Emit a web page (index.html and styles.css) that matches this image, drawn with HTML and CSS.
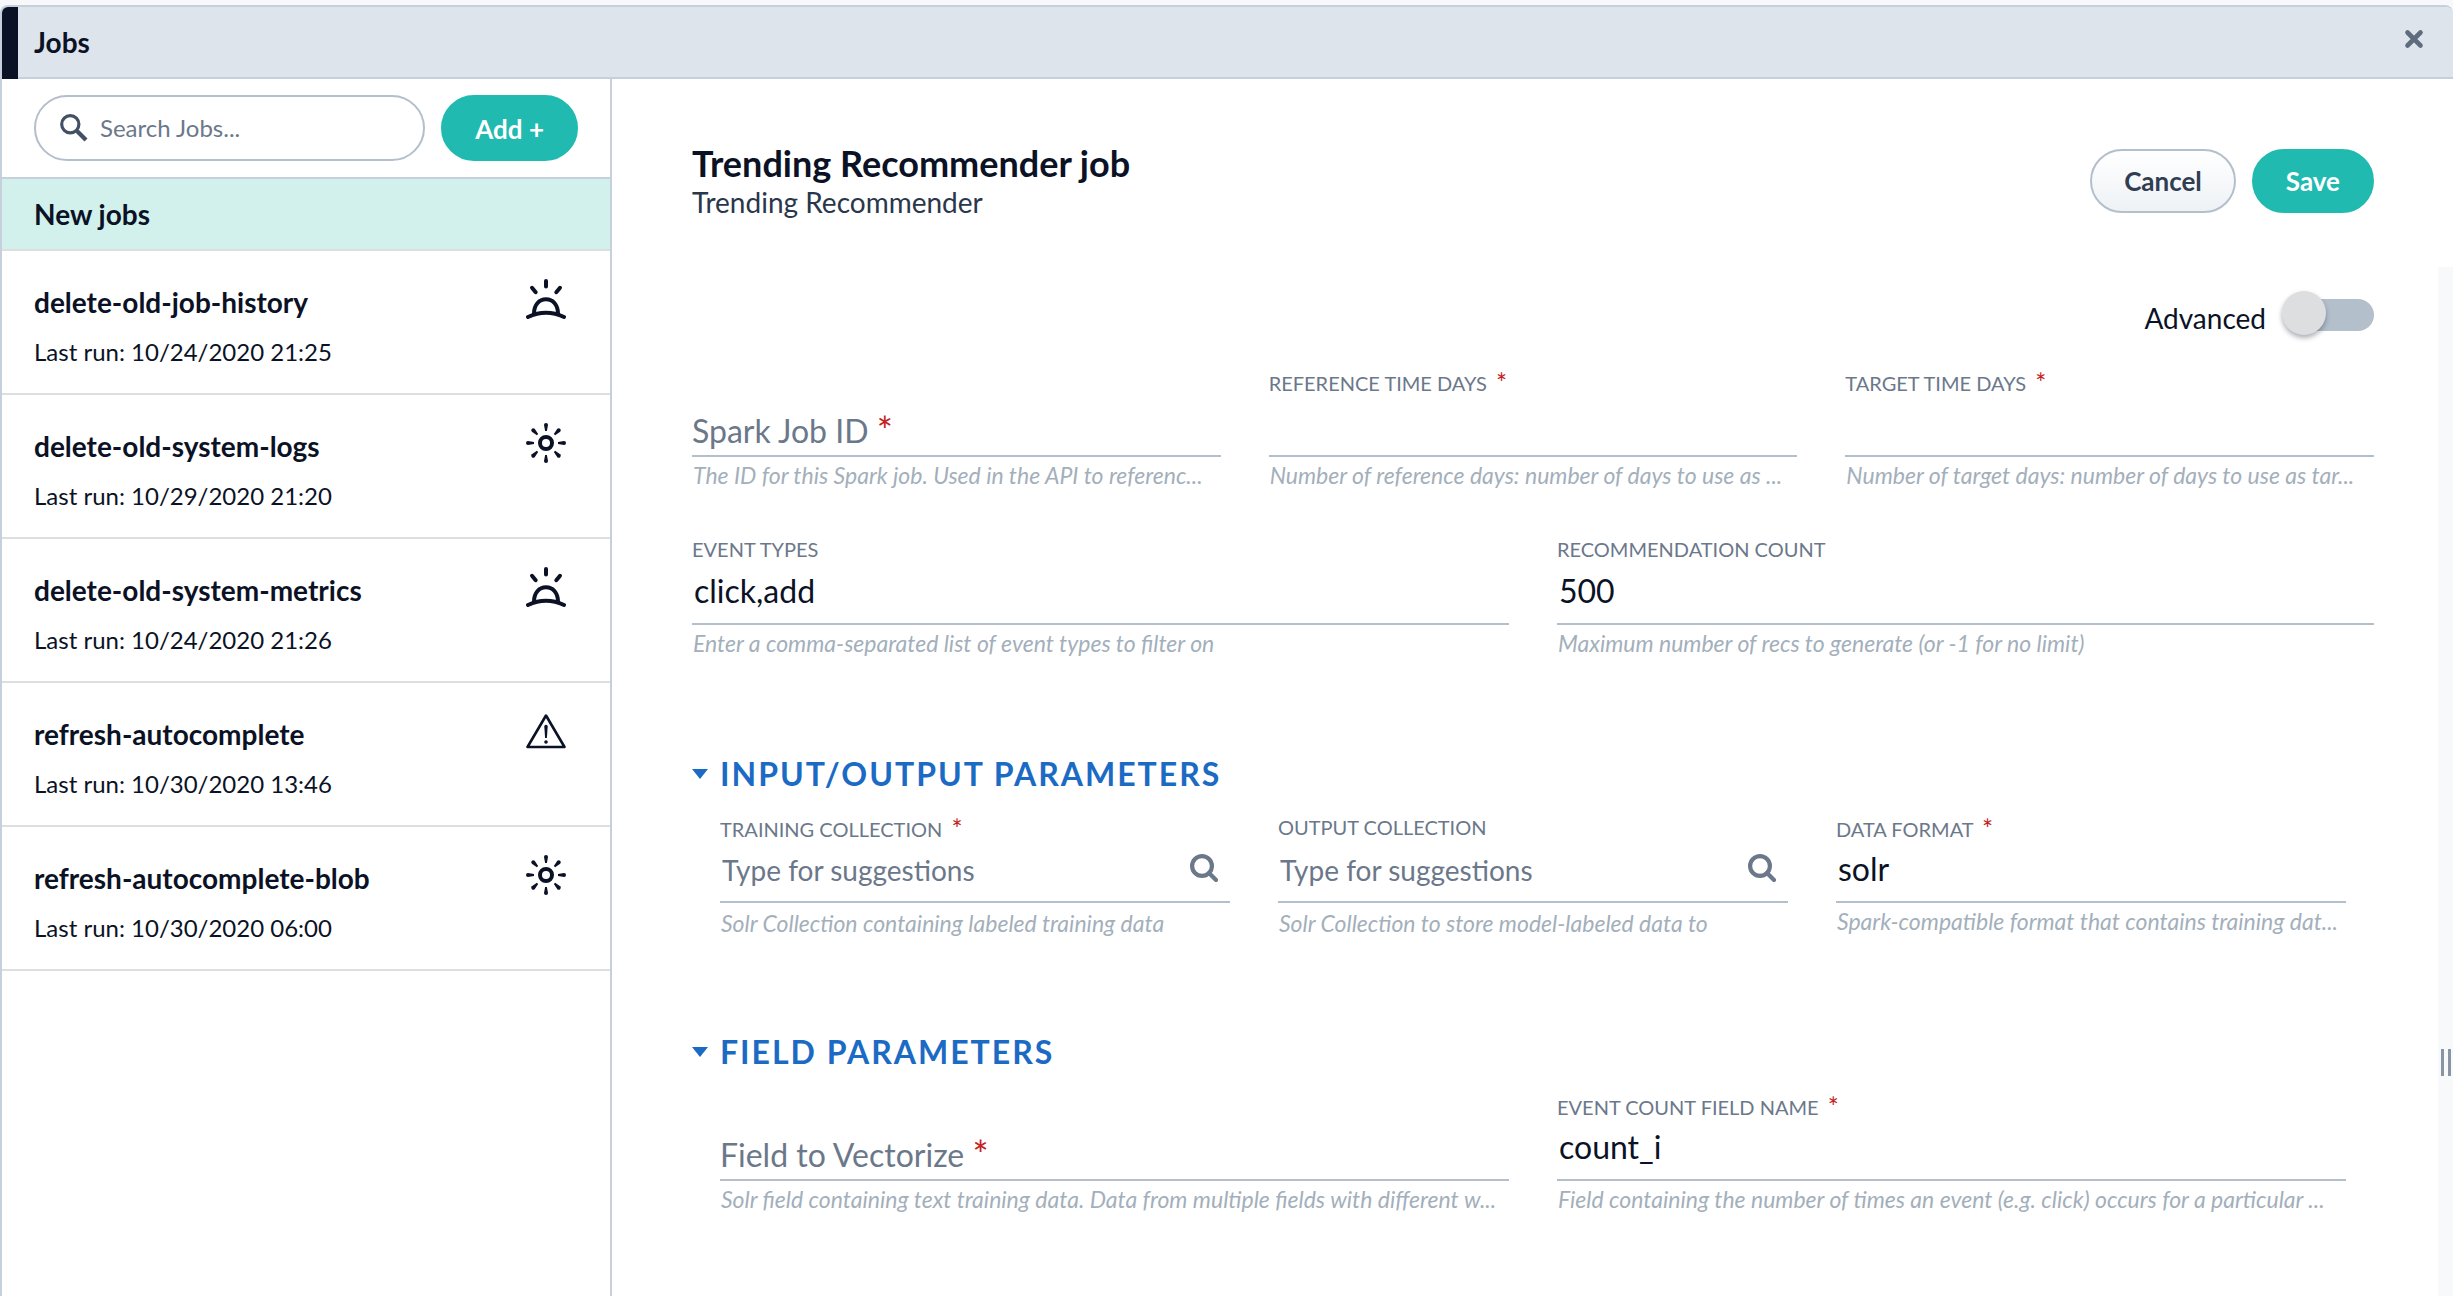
FILE: index.html
```html
<!DOCTYPE html>
<html lang="en">
<head>
<meta charset="utf-8">
<meta name="viewport" content="width=device-width, initial-scale=1">
<title>Jobs</title>
<link rel="stylesheet" href="styles.css">
</head>
<body>
<svg class="sprite" aria-hidden="true">
  <symbol id="icon-sunrise" viewBox="0 0 40 40">
    <g fill="none" stroke="currentColor" stroke-width="4" stroke-linecap="round" stroke-linejoin="round">
      <path d="M20 2v5.500M6 8.800l3.700 4.400M34 8.800l-3.700 4.400"/>
      <path d="M8 34.500C8 26 13 20.300 20 20.300S32 26 32 34.500"/>
      <path d="M2 38Q20 29.500 38 38"/>
    </g>
  </symbol>
  <symbol id="icon-sun" viewBox="0 0 40 40">
    <circle cx="20" cy="20" r="6" fill="none" stroke="currentColor" stroke-width="4"/>
    <g fill="currentColor">
      <path d="M18 2a2 2 0 0 1 4 0L20.900 8h-1.800z"/>
      <path d="M18 2a2 2 0 0 1 4 0L20.900 8h-1.800z" transform="rotate(45 20 20)"/>
      <path d="M18 2a2 2 0 0 1 4 0L20.900 8h-1.800z" transform="rotate(90 20 20)"/>
      <path d="M18 2a2 2 0 0 1 4 0L20.900 8h-1.800z" transform="rotate(135 20 20)"/>
      <path d="M18 2a2 2 0 0 1 4 0L20.900 8h-1.800z" transform="rotate(180 20 20)"/>
      <path d="M18 2a2 2 0 0 1 4 0L20.900 8h-1.800z" transform="rotate(225 20 20)"/>
      <path d="M18 2a2 2 0 0 1 4 0L20.900 8h-1.800z" transform="rotate(270 20 20)"/>
      <path d="M18 2a2 2 0 0 1 4 0L20.900 8h-1.800z" transform="rotate(315 20 20)"/>
    </g>
  </symbol>
  <symbol id="icon-warning" viewBox="0 0 40 40">
    <path d="M20 4.500L38.500 36H1.500z" fill="none" stroke="currentColor" stroke-width="2.600" stroke-linejoin="round"/>
    <path d="M18.300 15.500a1.700 1.700 0 0 1 3.400 0L20.900 27h-1.800z" fill="currentColor"/>
    <circle cx="20" cy="31" r="1.800" fill="currentColor"/>
  </symbol>
  <symbol id="icon-find" viewBox="0 0 28 28">
    <circle cx="12" cy="12" r="9.900" fill="none" stroke="currentColor" stroke-width="4.200"/>
    <path d="M19 19l7 7" fill="none" stroke="currentColor" stroke-width="4.200" stroke-linecap="round"/>
  </symbol>
  <symbol id="icon-search" viewBox="0 0 28 28">
    <circle cx="10.300" cy="10.300" r="8.600" fill="none" stroke="currentColor" stroke-width="3.200"/>
    <path d="M17 17l9 9" fill="none" stroke="currentColor" stroke-width="4.200"/>
  </symbol>
</svg>

<div class="panel">
  <header class="panel-header">
    <h1 class="panel-title">Jobs</h1>
    <button class="close" type="button" aria-label="Close">
      <svg viewBox="0 0 20 20" aria-hidden="true"><path d="M3.500 3.500l13 13M16.500 3.500l-13 13" fill="none" stroke="currentColor" stroke-width="4.600" stroke-linecap="round"/></svg>
    </button>
  </header>

  <div class="panel-body">
    <aside class="sidebar">
      <div class="toolbar">
        <div class="search">
          <svg class="search-icon" aria-hidden="true"><use href="#icon-search"/></svg>
          <input class="search-input" type="text" placeholder="Search Jobs..." aria-label="Search Jobs">
        </div>
        <button class="button primary tall" type="button">Add +</button>
      </div>
      <h2 class="group-title">New jobs</h2>
      <ul class="jobs">
        <li><a class="job" href="#">
          <span class="job-name">delete-old-job-history</span>
          <span class="job-run">Last run: 10/24/2020 21:25</span>
          <svg class="job-icon" aria-hidden="true"><use href="#icon-sunrise"/></svg>
        </a></li>
        <li><a class="job" href="#">
          <span class="job-name">delete-old-system-logs</span>
          <span class="job-run">Last run: 10/29/2020 21:20</span>
          <svg class="job-icon" aria-hidden="true"><use href="#icon-sun"/></svg>
        </a></li>
        <li><a class="job" href="#">
          <span class="job-name">delete-old-system-metrics</span>
          <span class="job-run">Last run: 10/24/2020 21:26</span>
          <svg class="job-icon" aria-hidden="true"><use href="#icon-sunrise"/></svg>
        </a></li>
        <li><a class="job" href="#">
          <span class="job-name">refresh-autocomplete</span>
          <span class="job-run">Last run: 10/30/2020 13:46</span>
          <svg class="job-icon" aria-hidden="true"><use href="#icon-warning"/></svg>
        </a></li>
        <li><a class="job" href="#">
          <span class="job-name">refresh-autocomplete-blob</span>
          <span class="job-run">Last run: 10/30/2020 06:00</span>
          <svg class="job-icon" aria-hidden="true"><use href="#icon-sun"/></svg>
        </a></li>
      </ul>
    </aside>

    <main class="editor">
      <div class="editor-header">
        <div>
          <h2 class="editor-title">Trending Recommender job</h2>
          <p class="editor-subtitle">Trending Recommender</p>
        </div>
        <div class="actions">
          <button class="button secondary" type="button">Cancel</button>
          <button class="button primary" type="submit" form="job-form">Save</button>
        </div>
      </div>

      <div class="editor-body">
        <form class="form" id="job-form">
          <div class="advanced">
            <label class="advanced-label" for="advanced">Advanced</label>
            <input class="switch" id="advanced" type="checkbox" role="switch">
          </div>

          <div class="fields three">
            <div class="field">
              <label class="float-label" for="spark-id">Spark Job ID <span class="required">*</span></label>
              <input class="control" id="spark-id" type="text">
              <p class="help">The ID for this Spark job. Used in the API to referenc...</p>
            </div>
            <div class="field">
              <label class="label is-required" for="ref-days">REFERENCE TIME DAYS <span class="required">*</span></label>
              <input class="control" id="ref-days" type="text">
              <p class="help">Number of reference days: number of days to use as ...</p>
            </div>
            <div class="field">
              <label class="label is-required" for="target-days">TARGET TIME DAYS <span class="required">*</span></label>
              <input class="control" id="target-days" type="text">
              <p class="help">Number of target days: number of days to use as tar...</p>
            </div>
          </div>

          <div class="fields two">
            <div class="field">
              <label class="label" for="event-types">EVENT TYPES</label>
              <input class="control" id="event-types" type="text" value="click,add">
              <p class="help">Enter a comma-separated list of event types to filter on</p>
            </div>
            <div class="field">
              <label class="label" for="rec-count">RECOMMENDATION COUNT</label>
              <input class="control" id="rec-count" type="text" value="500">
              <p class="help">Maximum number of recs to generate (or -1 for no limit)</p>
            </div>
          </div>

          <section class="section">
            <h3 class="section-title"><button class="section-toggle" type="button" aria-expanded="true">INPUT/OUTPUT PARAMETERS</button></h3>
            <div class="fields three">
              <div class="field suggest">
                <label class="label is-required" for="training">TRAINING COLLECTION <span class="required">*</span></label>
                <input class="control" id="training" type="text" placeholder="Type for suggestions">
                <svg class="find-icon" aria-hidden="true"><use href="#icon-find"/></svg>
                <p class="help">Solr Collection containing labeled training data</p>
              </div>
              <div class="field suggest">
                <label class="label" for="output">OUTPUT COLLECTION</label>
                <input class="control" id="output" type="text" placeholder="Type for suggestions">
                <svg class="find-icon" aria-hidden="true"><use href="#icon-find"/></svg>
                <p class="help">Solr Collection to store model-labeled data to</p>
              </div>
              <div class="field">
                <label class="label is-required" for="format">DATA FORMAT <span class="required">*</span></label>
                <input class="control" id="format" type="text" value="solr">
                <p class="help">Spark-compatible format that contains training dat...</p>
              </div>
            </div>
          </section>

          <section class="section">
            <h3 class="section-title"><button class="section-toggle" type="button" aria-expanded="true">FIELD PARAMETERS</button></h3>
            <div class="fields two">
              <div class="field">
                <label class="float-label" for="vectorize">Field to Vectorize <span class="required">*</span></label>
                <input class="control" id="vectorize" type="text">
                <p class="help">Solr field containing text training data. Data from multiple fields with different w...</p>
              </div>
              <div class="field">
                <label class="label is-required" for="count-field">EVENT COUNT FIELD NAME <span class="required">*</span></label>
                <input class="control" id="count-field" type="text" value="count_i">
                <p class="help">Field containing the number of times an event (e.g. click) occurs for a particular ...</p>
              </div>
            </div>
          </section>
        </form>
        <div class="resizer"><span class="grip"></span></div>
      </div>
    </main>
  </div>
</div>
</body>
</html>
```
FILE: styles.css
```css
:root {
  --ink: #0b1226;
  --slate: #6b788a;
  --muted: #a3afbb;
  --line: #b4bfcc;
  --frame: #c5d0dc;
  --teal: #20bab0;
  --blue: #1b6ac4;
  --red: #c4201c;
}

* {
  box-sizing: border-box;
}

body {
  margin: 0;
  background: #f6f8fa;
  color: var(--ink);
  font-family: Lato, sans-serif;
  font-size: 28px;
}

h1, h2, h3, p, ul {
  margin: 0;
  padding: 0;
}

button, input {
  font: inherit;
  color: inherit;
  margin: 0;
}

.sprite {
  display: none;
}

.panel {
  display: flex;
  flex-direction: column;
  min-height: calc(100vh - 5px);
  margin-top: 5px;
  border: 2px solid var(--frame);
  border-width: 2px 0 0 2px;
  border-radius: 8px 8px 0 0;
  background: #fff;
  overflow: hidden;
}

.panel-header {
  display: flex;
  align-items: center;
  justify-content: space-between;
  height: 72px;
  padding: 0 29px 0 16px;
  border-left: 16px solid var(--ink);
  background: linear-gradient(var(--frame), var(--frame)) bottom / 100% 2px no-repeat #dee4ec;
}

.panel-title {
  padding-bottom: 2px;
  font-size: 28px;
  font-weight: 700;
  line-height: 34px;
}

.close {
  display: flex;
  padding: 0 0 8px;
  border: 0;
  background: none;
  color: #5f6c7e;
}

.close svg {
  width: 20px;
  height: 20px;
}

.panel-body {
  display: flex;
  flex: 1;
}

.sidebar {
  flex: none;
  width: 610px;
  border-right: 2px solid var(--frame);
}

.toolbar {
  display: flex;
  gap: 16px;
  padding: 16px 32px;
  border-bottom: 2px solid var(--frame);
}

.search {
  display: flex;
  flex: 1;
  align-items: center;
  gap: 12px;
  min-width: 0;
  padding: 0 24px;
  border: 2px solid var(--line);
  border-radius: 33px;
}

.search-icon {
  flex: none;
  width: 28px;
  height: 28px;
  color: #435064;
}

.search-input {
  flex: 1;
  min-width: 0;
  padding: 0 0 2px;
  border: 0;
  outline: 0;
  background: none;
  font-size: 24px;
}

::placeholder {
  color: var(--slate);
  opacity: 1;
}

.button {
  height: 64px;
  padding: 0 32px;
  border: 2px solid var(--line);
  border-radius: 33px;
  font-size: 26px;
  font-weight: 700;
  line-height: 32px;
}

.button.tall {
  height: 66px;
  padding-top: 2px;
}

.button.primary {
  border-color: var(--teal);
  background-color: var(--teal);
  color: #fff;
}

.button.secondary {
  background: linear-gradient(#fff, #eef2f5);
  color: #303d52;
}

.group-title {
  padding: 18px 32px;
  border-bottom: 2px solid #dcdfe0;
  background: #d2f1ec;
  font-size: 28px;
  line-height: 34px;
}

.jobs {
  list-style: none;
}

.job {
  display: grid;
  grid-template-columns: 1fr 40px;
  row-gap: 18px;
  padding: 28px 44px 26px 32px;
  border-bottom: 2px solid #dcdfe0;
  color: inherit;
  text-decoration: none;
}

.job-name {
  padding-top: 6px;
  font-weight: 700;
  line-height: 34px;
}

.job-run {
  grid-row: 2;
  font-size: 24px;
  line-height: 30px;
}

.job-icon {
  grid-area: 1 / 2;
  width: 40px;
  height: 40px;
}

.editor {
  display: flex;
  flex: 1;
  flex-direction: column;
  min-width: 0;
}

.editor-header {
  display: flex;
  align-items: center;
  justify-content: space-between;
  padding: 62px 79px 46px 80px;
}

.editor-title {
  font-size: 36px;
  line-height: 44px;
}

.editor-subtitle {
  padding-bottom: 2px;
  color: #2a364b;
  line-height: 34px;
}

.actions {
  display: flex;
  gap: 16px;
}

.editor-body {
  display: flex;
  flex: 1;
}

.form {
  flex: 1;
  min-width: 0;
  padding: 24px 64px 80px 80px;
}

.advanced {
  display: flex;
  align-items: center;
  justify-content: flex-end;
  gap: 16px;
  height: 44px;
  margin-bottom: 34px;
  padding-top: 4px;
}

.advanced-label {
  padding-top: 6px;
}

.switch {
  position: relative;
  width: 92px;
  height: 32px;
  appearance: none;
  background: linear-gradient(var(--line), var(--line)) right / 80px 32px no-repeat;
  border-radius: 16px;
}

.switch::before {
  content: "";
  position: absolute;
  top: -8px;
  left: 0;
  width: 44px;
  height: 44px;
  border-radius: 50%;
  background: #dcdee0;
  box-shadow: 0 3px 5px rgba(20, 30, 50, 0.35);
}

.fields {
  display: grid;
  gap: 48px;
}

.three {
  grid-template-columns: repeat(3, minmax(0, 1fr));
}

.two {
  grid-template-columns: repeat(2, minmax(0, 1fr));
}

.fields + .fields {
  margin-top: 46px;
}

/* Rows of a field: label, control, help text. */
.field {
  display: grid;
  grid-template-rows: 26px 62px 34px;
  grid-template-columns: minmax(0, 1fr);
}

.label {
  grid-area: 1 / 1;
  color: var(--slate);
  font-size: 20px;
  line-height: 24px;
}

.label.is-required {
  padding-top: 2px;
}

.required {
  color: var(--red);
  font-size: 38px;
  line-height: 0;
  vertical-align: -2px;
}

.label .required {
  margin-left: 4px;
  font-size: 26px;
}

.float-label {
  grid-area: 2 / 1;
  align-self: end;
  padding-bottom: 7px;
  color: var(--slate);
  font-size: 32px;
  line-height: 38px;
}

.control {
  grid-area: 2 / 1;
  width: 100%;
  padding: 0 2px 6px;
  border: 0;
  border-bottom: 2px solid var(--line);
  border-radius: 0;
  outline: 0;
  background: none;
  font-size: 32px;
}

.help {
  grid-area: 3 / 1;
  padding: 4px 0 0 1px;
  overflow: hidden;
  color: var(--muted);
  font-size: 23px;
  font-style: italic;
  line-height: 28px;
  text-overflow: ellipsis;
  white-space: nowrap;
}

.suggest .control {
  padding: 0 48px 2px 2px;
  font-size: 28px;
}

.suggest .help {
  padding-top: 6px;
}

.find-icon {
  grid-area: 2 / 1;
  justify-self: end;
  width: 28px;
  height: 28px;
  margin: 13px 12px 0 0;
  color: var(--slate);
}

.section {
  padding: 96px 28px 0;
}

.section-title {
  margin: 0 0 22px -28px;
  font-size: 32px;
  line-height: 38px;
}

.section-toggle {
  display: flex;
  align-items: center;
  gap: 12px;
  padding: 0;
  border: 0;
  background: none;
  color: var(--blue);
  letter-spacing: 2px;
}

.section-toggle::before {
  content: "";
  border: 8px solid transparent;
  border-top: 10px solid var(--blue);
  border-bottom: 0;
}

.resizer {
  display: flex;
  flex: none;
  align-items: flex-end;
  justify-content: center;
  width: 15px;
  padding-bottom: 220px;
  background: #f7f9fb;
}

.grip {
  width: 10px;
  height: 27px;
  border: 3px solid #8995a5;
  border-width: 0 3px;
}
```
